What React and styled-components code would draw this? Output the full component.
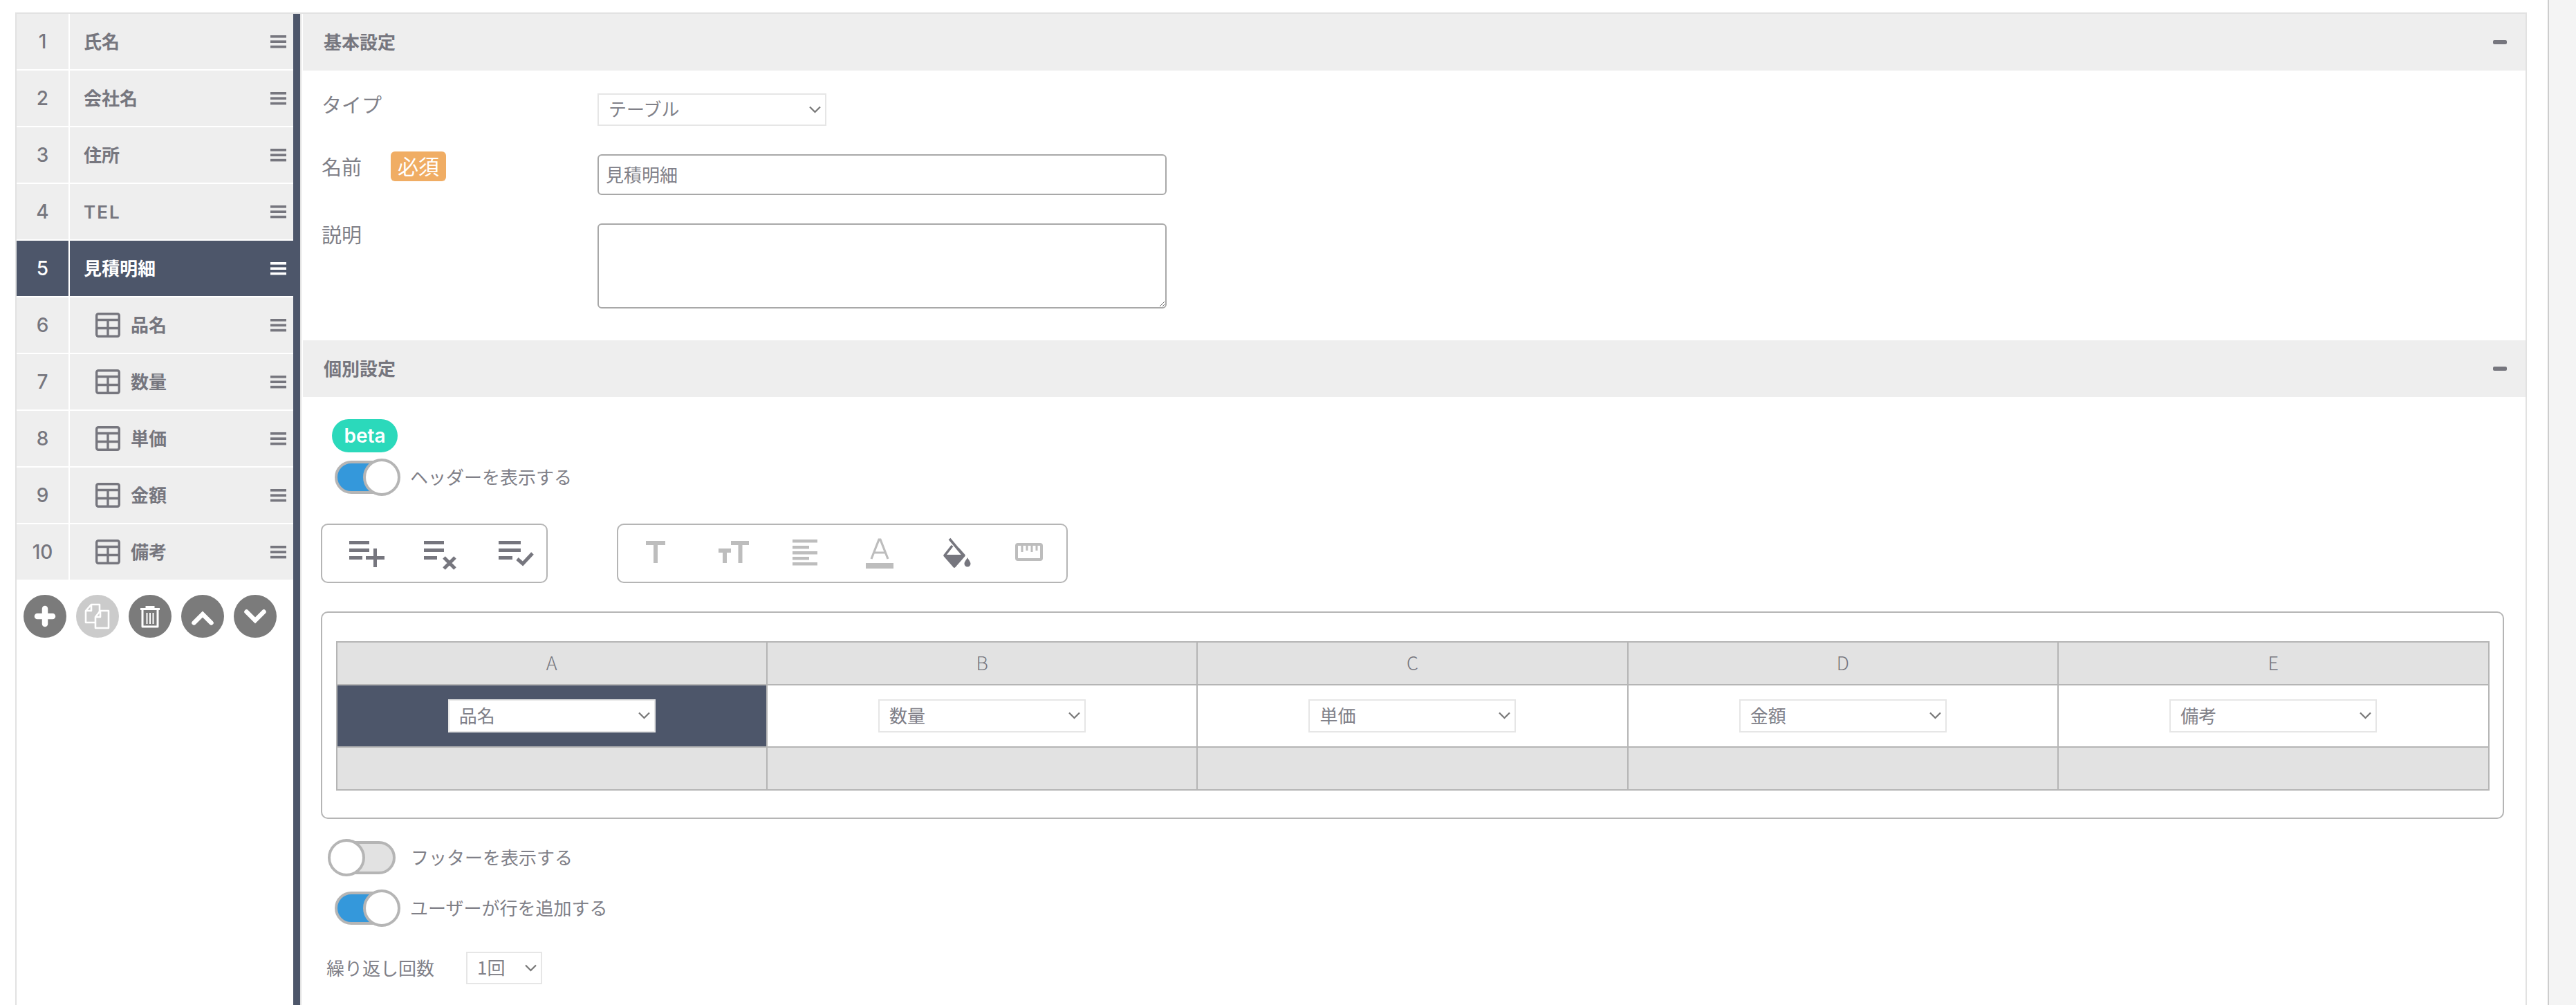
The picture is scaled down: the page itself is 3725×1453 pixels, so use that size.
import React from "react";
import styled, { createGlobalStyle } from "styled-components";

const DARK = "#4d566a";
const INK = "#76767e";
const TEXT = "#808088";
const LINE = "#b5b5b5";
const PALE = "#bdbdbd";

const Global = createGlobalStyle`
  html, body { margin: 0; padding: 0; background: #fff; overflow: hidden; }
  body { font-family: "Noto Sans CJK JP", "Noto Sans", sans-serif; color: ${TEXT}; }
  * { box-sizing: border-box; }
`;

const Page = styled.div`
  display: flex;
  height: 1453px;
  overflow: hidden;
`;
const Panel = styled.div`
  width: 3632px;
  margin: 18px 0 0 22px;
  display: flex;
  border: 2px solid #e2e2e2;
  border-bottom: 0;
`;
const Scrollbar = styled.div`
  width: 41px;
  margin-left: 30px;
  background: #f4f4f4;
  border-left: 2px solid #cdcdcd;
`;
const Sidebar = styled.aside`
  width: 400px;
  flex: none;
`;
const Divider = styled.div`
  width: 12px;
  flex: none;
  background: ${DARK};
  border-right: 2px solid #e2e2e2;
`;
const Main = styled.main`
  flex: 1;
  min-width: 0;
  margin-left: 2px;
`;

const Row = styled.div`
  display: flex;
  height: 80px;
  margin-bottom: 2px;
  gap: 2px;
  color: ${(p) => (p.$active ? "#fff" : INK)};
`;
const RowNum = styled.div`
  width: 75px;
  flex: none;
  display: flex;
  align-items: center;
  justify-content: center;
  font: 500 28px Inter, "Noto Sans", sans-serif;
  background: ${(p) => (p.$active ? DARK : "#eee")};
`;
const RowBody = styled.div`
  flex: 1;
  display: flex;
  align-items: center;
  padding: 0 10px 0 ${(p) => (p.$child ? "37px" : "20px")};
  font-size: 26px;
  font-weight: 700;
  background: ${(p) => (p.$active ? DARK : "#eee")};
`;
const RowLabel = styled.span`
  flex: 1;
  margin-left: ${(p) => (p.$child ? "15px" : "0")};
  padding-top: 2px;
  line-height: 1;
  font-family: Inter, "Noto Sans CJK JP", sans-serif;
  font-weight: ${(p) => (p.$latin ? 600 : 700)};
  letter-spacing: ${(p) => (p.$latin ? "2px" : "0")};
`;
const ButtonBar = styled.div`
  display: flex;
  gap: 14px;
  padding: 20px 0 0 10px;
`;
const RoundButton = styled.button`
  width: 62px;
  height: 62px;
  padding: 0;
  border: 0;
  border-radius: 50%;
  display: block;
  background: ${(p) => (p.$off ? "#cbcbcb" : "#7b7b7b")};
`;

const SectionHead = styled.header`
  height: 82px;
  display: flex;
  align-items: center;
  justify-content: space-between;
  padding: 0 27px 0 30px;
  background: #eee;
  color: ${INK};
  font-size: 26px;
  font-weight: 700;
`;
const SectionTitle = styled.span`
  margin-top: -3px;
`;
const Minus = styled.i`
  width: 20px;
  height: 6px;
  border-radius: 2px;
  background: ${INK};
`;
const BasicBody = styled.section`
  height: 390px;
  padding-top: 28px;
`;
const FormRow = styled.div`
  display: flex;
  margin-bottom: 38px;
`;
const FormLabel = styled.div`
  width: 426px;
  flex: none;
  height: 40px;
  margin-top: ${(p) => p.$mt || 0}px;
  padding-left: 27px;
  display: flex;
  align-items: center;
  font-size: 29px;
  line-height: 40px;
`;
const Required = styled.span`
  width: 80px;
  height: 43px;
  margin-left: 42px;
  padding-bottom: 3px;
  display: flex;
  align-items: center;
  justify-content: center;
  border-radius: 6px;
  background: #f0ad64;
  color: #fff;
  font-size: 30px;
`;
const SelectWrap = styled.div`
  position: relative;
  flex: none;
  width: ${(p) => p.$w}px;
  height: ${(p) => p.$h || 47}px;
  margin-top: ${(p) => p.$mt || 0}px;
`;
const NativeSelect = styled.select`
  width: 100%;
  height: 100%;
  padding: 0 0 4px 14px;
  appearance: none;
  border: 2px solid #e6e6e6;
  border-radius: 0;
  background: #fff;
  color: ${TEXT};
  font: 400 26px "Noto Sans CJK JP", sans-serif;
`;
const Chevron = styled.svg`
  position: absolute;
  right: 8px;
  top: 50%;
  margin-top: -6px;
  width: 17px;
  height: 11px;
  pointer-events: none;
`;
const TextInput = styled.input`
  width: 823px;
  height: 59px;
  margin-top: 3px;
  padding: 0 10px 3px;
  border: 2.5px solid #a8a8a8;
  border-radius: 6px;
  color: ${TEXT};
  font: 400 26px "Noto Sans CJK JP", sans-serif;
`;
const TextArea = styled.textarea`
  width: 823px;
  height: 123px;
  margin-top: 3px;
  border: 2.5px solid #a8a8a8;
  border-radius: 6px;
  display: block;
`;

const DetailBody = styled.section`
  padding-top: 32px;
`;
const Beta = styled.span`
  display: flex;
  align-items: center;
  justify-content: center;
  width: 95px;
  height: 48px;
  margin-left: 42px;
  border-radius: 24px;
  background: #2bd9bb;
  color: #fff;
  font: 600 28px Inter, "Noto Sans", sans-serif;
`;
const ToggleRow = styled.div`
  display: flex;
  align-items: center;
  height: 54px;
  margin-top: ${(p) => p.$mt}px;
  font-size: 26px;
`;
const ToggleText = styled.span`
  margin: -3px 0 0 -2px;
`;
const Track = styled.div`
  position: relative;
  width: 90px;
  height: 48px;
  flex: none;
  margin: 0 ${(p) => (p.$on ? 21 : 24)}px 0 ${(p) => (p.$on ? 46 : 44)}px;
  border: 4px solid ${LINE};
  border-radius: 24px;
  background: ${(p) => (p.$on ? "#3498db" : "#e2e2e2")};
`;
const Knob = styled.div`
  position: absolute;
  top: -7px;
  ${(p) => (p.$on ? "right: -9px;" : "left: -12px;")}
  width: 54px;
  height: 54px;
  border: 4px solid ${LINE};
  border-radius: 50%;
  background: #fff;
`;
const Toolbars = styled.div`
  display: flex;
  gap: 100px;
  margin: 40px 0 0 26px;
`;
const Toolbar = styled.div`
  display: flex;
  height: 86px;
  border: 2px solid ${LINE};
  border-radius: 10px;
`;
const ToolCell = styled.div`
  width: 108px;
  display: flex;
  align-items: center;
  justify-content: center;
`;
const TableCard = styled.div`
  width: 3157px;
  height: 300px;
  margin: 41px 0 0 26px;
  padding: 41px 0 0 19.5px;
  border: 2.5px solid ${LINE};
  border-radius: 10px;
`;
const Grid = styled.table`
  width: 3114px;
  table-layout: fixed;
  border-collapse: collapse;
`;
const Cell = styled.td`
  padding: 0 0 ${(p) => p.$pb || 0}px;
  height: ${(p) => p.$h}px;
  border: 2px solid ${LINE};
  text-align: center;
  color: ${INK};
  background: ${(p) => p.$bg};
  font-size: 27px;
  font-weight: 300;
`;
const CellInner = styled.div`
  display: flex;
  justify-content: center;
`;
const RepeatRow = styled.div`
  display: flex;
  align-items: center;
  margin: 36px 0 0 36px;
  font-size: 26px;
  gap: 46px;
`;

const Bars = () => (
  <svg width="23" height="20" viewBox="0 0 23 20" fill="currentColor">
    <rect y="1" width="23" height="3.6" />
    <rect y="8.4" width="23" height="3.6" />
    <rect y="15.8" width="23" height="3.6" />
  </svg>
);
const TableIcon = () => (
  <svg width="36" height="36" viewBox="0 0 36 36" fill="none" stroke={INK} strokeWidth="3.4">
    <rect x="1.7" y="1.7" width="32.6" height="32.6" rx="2.5" />
    <path d="M2 10.5H34M2 22.5H34M18 10.5V34" />
  </svg>
);
const Down = () => (
  <Chevron viewBox="0 0 17 11" fill="none" stroke="#777" strokeWidth="2.2">
    <path d="M1 1.5L8.5 9L16 1.5" />
  </Chevron>
);
const Select = ({ value, w, h, mt }) => (
  <SelectWrap $w={w} $h={h} $mt={mt}>
    <NativeSelect defaultValue={value}>
      <option>{value}</option>
    </NativeSelect>
    <Down />
  </SelectWrap>
);
const Toggle = ({ on }) => (
  <Track $on={on}>
    <Knob $on={on} />
  </Track>
);

const GlyphSvg = styled.svg`
  display: block;
`;
const Glyph = ({ children }) => (
  <GlyphSvg width="62" height="62" viewBox="0 0 62 62" fill="none" stroke="#fff">
    {children}
  </GlyphSvg>
);

const ListLines = ({ w1, w2 }) => (
  <g fill={INK} stroke="none">
    <rect x="25" y="12" width={w1} height="5" />
    <rect x="25" y="23" width={w1} height="5" />
    <rect x="25" y="34" width={w2} height="5" />
  </g>
);
const ToolSvg = ({ children }) => (
  <svg width="80" height="60" viewBox="0 0 80 60" fill="none">
    {children}
  </svg>
);

const TextTools = [
  <ToolSvg key="t">
    <path d="M26 12H54V18H43V44H37V18H26Z" fill={PALE} />
  </ToolSvg>,
  <ToolSvg key="tt">
    <path d="M41 12H67V18H57.5V44H51.5V18H41Z M23 23H41V29H35V44H29V29H23Z" fill={PALE} />
  </ToolSvg>,
  <ToolSvg key="align">
    <g fill={PALE}>
      <rect x="22" y="10" width="36" height="4.5" />
      <rect x="22" y="19" width="24" height="4.5" />
      <rect x="22" y="27" width="36" height="4.5" />
      <rect x="22" y="35" width="24" height="4.5" />
      <rect x="22" y="43" width="36" height="4.5" />
    </g>
  </ToolSvg>,
  <ToolSvg key="a">
    <path d="M28 38L39 10H41L52 38M32 29H48" stroke={PALE} strokeWidth="3.2" />
    <rect x="20" y="44" width="40" height="8" fill={PALE} />
  </ToolSvg>,
  <ToolSvg key="bucket">
    <path d="M33 9L53 33" stroke={INK} strokeWidth="3.6" />
    <path d="M37 19L26 33L40 49L54 33L45 23" stroke={INK} strokeWidth="3.6" strokeLinejoin="round" />
    <path d="M27 32H53L40 48Z" fill={INK} />
    <path d="M59 36C61 40 63.5 42 63.5 45A4.5 4.5 0 0 1 54.5 45C54.5 42 57 40 59 36Z" fill={INK} />
  </ToolSvg>,
  <ToolSvg key="ruler">
    <rect x="22" y="17" width="36" height="22" rx="2" stroke={PALE} strokeWidth="4" />
    <path d="M30 18V28M37 18V26M44 18V28M51 18V26" stroke={PALE} strokeWidth="3" />
  </ToolSvg>,
];

const ITEMS = [
  { label: "氏名" },
  { label: "会社名" },
  { label: "住所" },
  { label: "TEL", latin: true },
  { label: "見積明細", active: true },
  { label: "品名", child: true },
  { label: "数量", child: true },
  { label: "単価", child: true },
  { label: "金額", child: true },
  { label: "備考", child: true },
];
const COLS = [
  ["A", "品名"],
  ["B", "数量"],
  ["C", "単価"],
  ["D", "金額"],
  ["E", "備考"],
];

export default function App() {
  return (
    <Page>
      <Global />
      <Panel>
        <Sidebar>
          {ITEMS.map(({ label, child, active, latin }, i) => (
            <Row key={label} $active={active}>
              <RowNum $active={active}>{i + 1}</RowNum>
              <RowBody $active={active} $child={child}>
                {child && <TableIcon />}
                <RowLabel $child={child} $latin={latin}>
                  {label}
                </RowLabel>
                <Bars />
              </RowBody>
            </Row>
          ))}
          <ButtonBar>
            <RoundButton aria-label="追加">
              <Glyph>
                <path d="M31 20V42M20 31H42" strokeWidth="8.5" strokeLinecap="round" />
              </Glyph>
            </RoundButton>
            <RoundButton $off aria-label="複製">
              <Glyph>
                <path d="M22 14H34V40H14V23Z M22 14V23H14" strokeWidth="2.6" strokeLinejoin="round" />
                <path d="M35 23H47V48H28V32Z" fill="#cbcbcb" strokeWidth="2.6" strokeLinejoin="round" />
                <path d="M35 23V32H28" strokeWidth="2.6" strokeLinejoin="round" />
              </Glyph>
            </RoundButton>
            <RoundButton aria-label="削除">
              <Glyph>
                <path d="M17 20.5H45M26 20V17.5H36V20" strokeWidth="3" />
                <path d="M20 22V46H42V22" strokeWidth="3" strokeLinejoin="round" />
                <path d="M26.5 26V42M31 26V42M35.5 26V42" strokeWidth="2" />
              </Glyph>
            </RoundButton>
            <RoundButton aria-label="上へ">
              <Glyph>
                <path d="M18.5 40.5L31 28L43.5 40.5" strokeWidth="6.5" strokeLinecap="round" />
              </Glyph>
            </RoundButton>
            <RoundButton aria-label="下へ">
              <Glyph>
                <path d="M18.5 24.5L31 37L43.5 24.5" strokeWidth="6.5" strokeLinecap="round" />
              </Glyph>
            </RoundButton>
          </ButtonBar>
        </Sidebar>
        <Divider />
        <Main>
          <SectionHead>
            <SectionTitle>基本設定</SectionTitle>
            <Minus />
          </SectionHead>
          <BasicBody>
            <FormRow>
              <FormLabel>タイプ</FormLabel>
              <Select value="テーブル" w={331} mt={5} />
            </FormRow>
            <FormRow>
              <FormLabel>
                名前
                <Required>必須</Required>
              </FormLabel>
              <TextInput defaultValue="見積明細" />
            </FormRow>
            <FormRow>
              <FormLabel $mt={-2}>説明</FormLabel>
              <TextArea />
            </FormRow>
          </BasicBody>
          <SectionHead>
            <SectionTitle>個別設定</SectionTitle>
            <Minus />
          </SectionHead>
          <DetailBody>
            <Beta>beta</Beta>
            <ToggleRow $mt={9}>
              <Toggle on />
              <ToggleText>ヘッダーを表示する</ToggleText>
            </ToggleRow>
            <Toolbars>
              <Toolbar>
                <ToolCell>
                  <ToolSvg>
                    <ListLines w1={29} w2={19} />
                    <path d="M60 23H65V34H76V39H65V50H60V39H49V34H60Z" fill={INK} />
                  </ToolSvg>
                </ToolCell>
                <ToolCell>
                  <ToolSvg>
                    <ListLines w1={29} w2={19} />
                    <path d="M54 36L70 52M70 36L54 52" stroke={INK} strokeWidth="5" />
                  </ToolSvg>
                </ToolCell>
                <ToolCell>
                  <ToolSvg>
                    <ListLines w1={32} w2={20} />
                    <path d="M52 38L60 45L74 30" stroke={INK} strokeWidth="5" />
                  </ToolSvg>
                </ToolCell>
              </Toolbar>
              <Toolbar>
                {TextTools.map((tool) => (
                  <ToolCell key={tool.key}>{tool}</ToolCell>
                ))}
              </Toolbar>
            </Toolbars>
            <TableCard>
              <Grid>
                <tbody>
                  <tr>
                    {COLS.map(([h]) => (
                      <Cell key={h} $h={62} $pb={3} $bg="#e2e2e2">
                        {h}
                      </Cell>
                    ))}
                  </tr>
                  <tr>
                    {COLS.map(([h, v], i) => (
                      <Cell key={h} $h={90} $bg={i === 0 ? DARK : "#fff"}>
                        <CellInner>
                          <Select value={v} w={300} h={48} />
                        </CellInner>
                      </Cell>
                    ))}
                  </tr>
                  <tr>
                    {COLS.map(([h]) => (
                      <Cell key={h} $h={62} $bg="#e2e2e2" />
                    ))}
                  </tr>
                </tbody>
              </Grid>
            </TableCard>
            <ToggleRow $mt={29}>
              <Toggle />
              <ToggleText>フッターを表示する</ToggleText>
            </ToggleRow>
            <ToggleRow $mt={19}>
              <Toggle on />
              <ToggleText>ユーザーが行を追加する</ToggleText>
            </ToggleRow>
            <RepeatRow>
              <ToggleText>繰り返し回数</ToggleText>
              <Select value="1回" w={110} />
            </RepeatRow>
          </DetailBody>
        </Main>
      </Panel>
      <Scrollbar />
    </Page>
  );
}
